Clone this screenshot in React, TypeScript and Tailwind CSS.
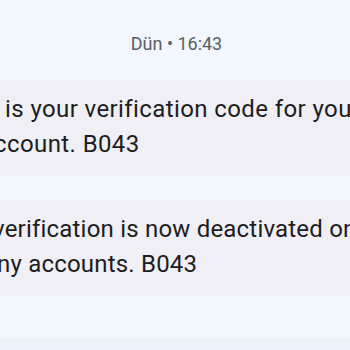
export default function App() {
  return (
    <div
      className="w-[350px] h-[350px] overflow-hidden bg-[#f1f7fd] flex flex-col"
      style={{ fontFamily: 'Roboto, "Noto Sans", sans-serif' }}
    >
      <div className="h-[80px] pt-[32px] pl-[3px] text-center text-[18px] leading-[24px] text-[#5b5e63]">
        Dün • 16:43
      </div>

      <div className="h-[96px] bg-[#efeff5] text-[24px] leading-[35px] tracking-[0.4px] text-[#1d1d1f] pt-[12px] flex flex-col">
        <div className="whitespace-nowrap ml-[5px]">is your verification code for your</div>
        <div className="whitespace-nowrap -ml-[6px]">ccount. B043</div>
      </div>

      <div className="h-[24px]" />

      <div className="h-[96px] bg-[#efeff5] text-[24px] leading-[35px] tracking-[0.2px] text-[#1d1d1f] pt-[12px] flex flex-col">
        <div className="whitespace-nowrap -ml-[7px]">verification is now deactivated on</div>
        <div className="whitespace-nowrap -ml-[3px]">ny accounts. B043</div>
      </div>

      <div className="h-[42px]" />
      <div className="flex-1 bg-[#ecf3fb]" />
    </div>
  );
}
